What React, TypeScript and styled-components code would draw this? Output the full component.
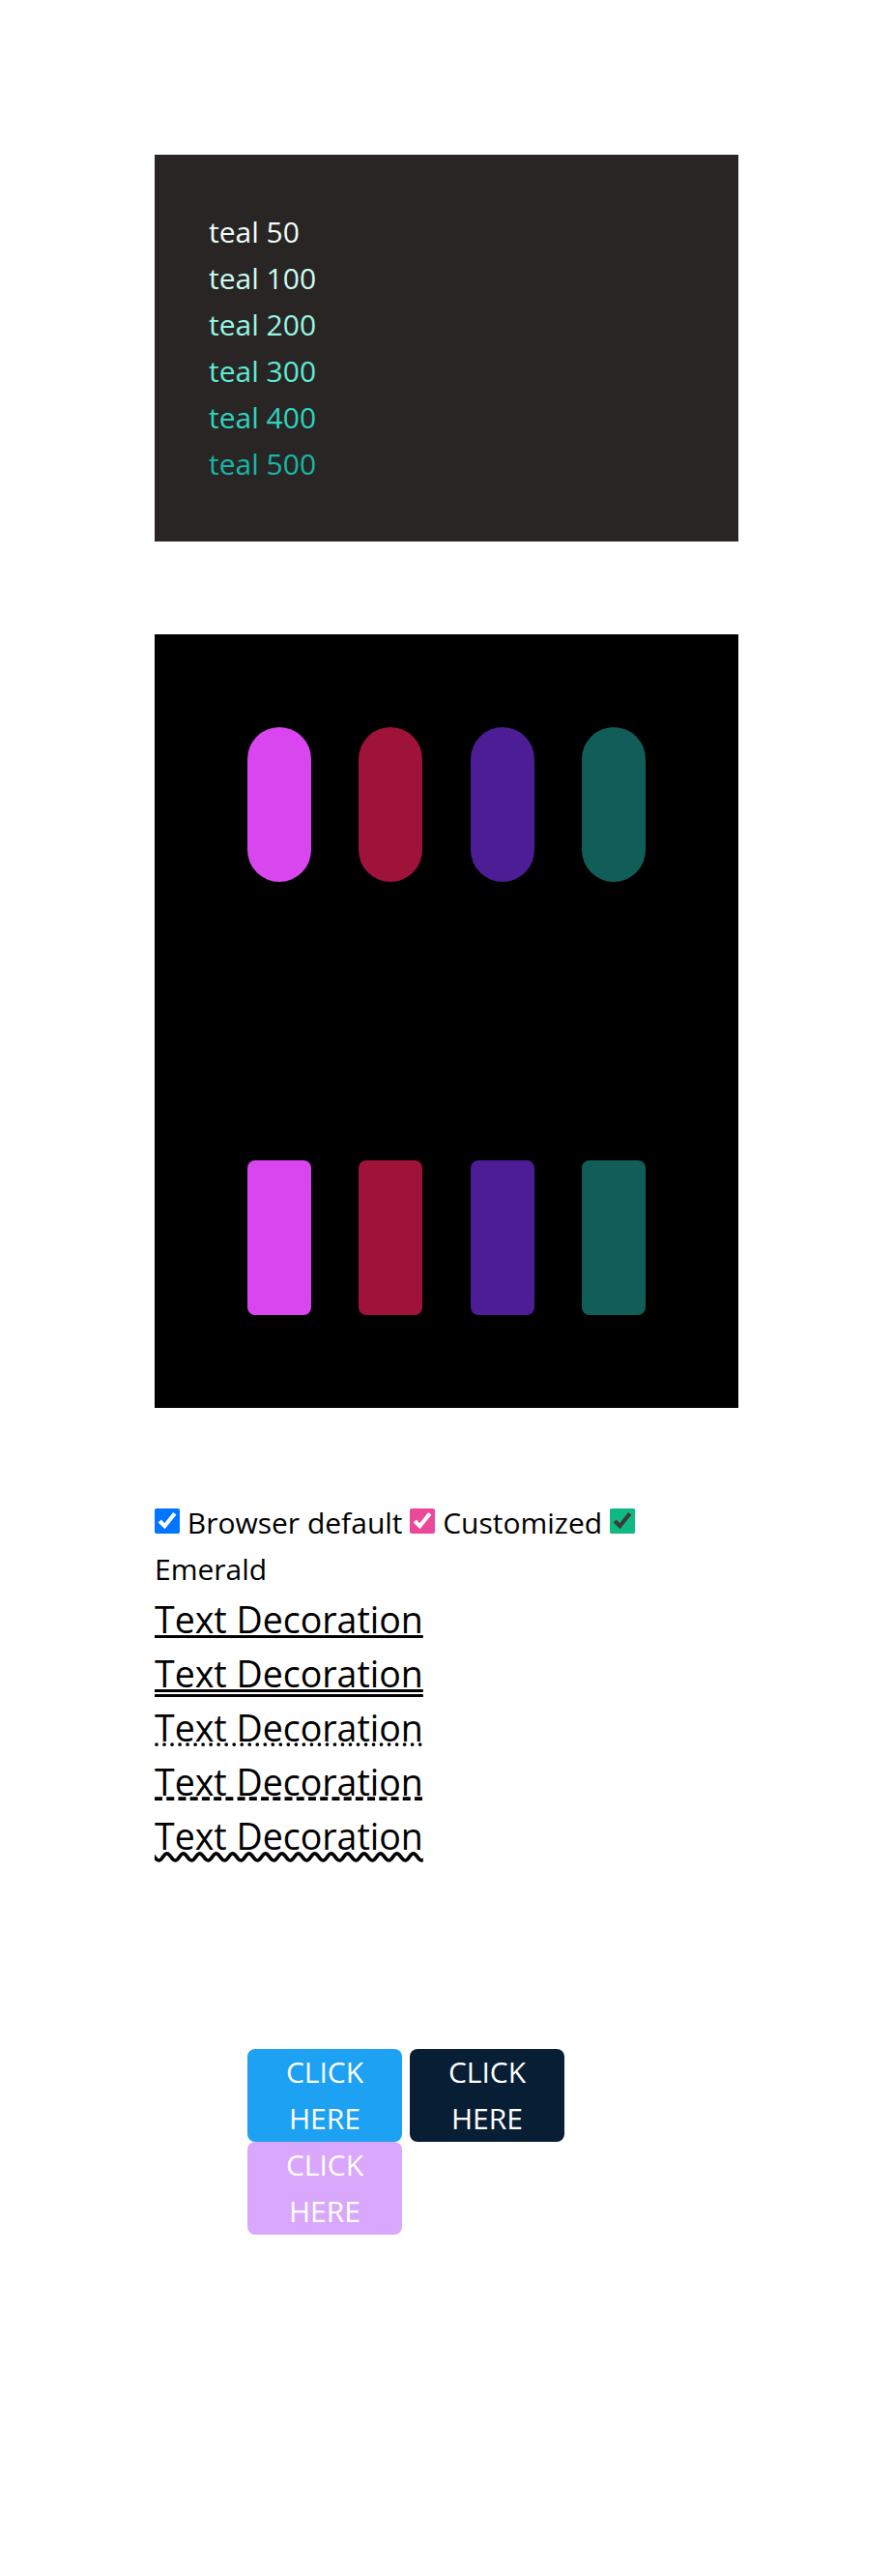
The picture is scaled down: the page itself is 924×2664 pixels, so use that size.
import React from 'react';
import styled, { createGlobalStyle } from 'styled-components';

const GlobalStyle = createGlobalStyle`
    html, body {
        margin: 0;
        padding: 0;
        background: #ffffff;
    }
    body {
        font-family: "Open Sans", "Noto Sans", sans-serif;
        font-size: 30px;
        line-height: 48px;
        color: #000000;
    }
`;

const tealShades = [
    { name: 'teal 50', color: '#f0fdfa' },
    { name: 'teal 100', color: '#ccfbf1' },
    { name: 'teal 200', color: '#99f6e4' },
    { name: 'teal 300', color: '#5eead4' },
    { name: 'teal 400', color: '#2dd4bf' },
    { name: 'teal 500', color: '#14b8a6' },
];

const swatchColors = ['#d946ef', '#9f1239', '#4c1d95', '#115e59'];

const decorations = ['solid', 'double', 'dotted', 'dashed', 'wavy'];

const buttons = [
    { bg: '#1da1f2' },
    { bg: '#081e34' },
    { bg: '#d9a8fc' },
];

function App() {
    return (
        <Page>
            <GlobalStyle />
            <TealPanel>
                {tealShades.map((shade) => (
                    <TealLine key={shade.name} $color={shade.color}>{shade.name}</TealLine>
                ))}
            </TealPanel>

            <SwatchPanel>
                <SwatchRow>
                    {swatchColors.map((c) => (
                        <Swatch key={'pill' + c} $color={c} $radius="33px" />
                    ))}
                </SwatchRow>
                <SwatchRow>
                    {swatchColors.map((c) => (
                        <Swatch key={'box' + c} $color={c} $radius="8px" />
                    ))}
                </SwatchRow>
            </SwatchPanel>

            <CheckLine>
                <Check type="checkbox" defaultChecked /> Browser default{' '}
                <Check type="checkbox" defaultChecked $accent="#ec4899" /> Customized{' '}
                <Check type="checkbox" defaultChecked $accent="#10b981" /> Emerald
            </CheckLine>

            <Decorations>
                {decorations.map((style) => (
                    <Decorated key={style} $style={style}>Text Decoration</Decorated>
                ))}
            </Decorations>

            <ButtonArea>
                <ButtonRow>
                    {buttons.map((b, i) => (
                        <ClickButton key={i} type="button" $bg={b.bg}>CLICK HERE</ClickButton>
                    ))}
                </ButtonRow>
            </ButtonArea>
        </Page>
    );
}

const Page = styled.div`
    width: 604px;
    padding: 160px 160px 160px;
`;

const TealPanel = styled.div`
    background-color: #292524;
    padding: 56px;
    margin-bottom: 96px;
`;

const TealLine = styled.div<{ $color: string }>`
    color: ${(props) => props.$color};
    font-size: 30px;
    line-height: 48px;
`;

const SwatchPanel = styled.div`
    background-color: #000000;
    padding: 96px;
    display: flex;
    flex-direction: column;
    gap: 288px;
    margin-bottom: 95px;
`;

const SwatchRow = styled.div`
    display: flex;
    justify-content: space-between;
`;

const Swatch = styled.div<{ $color: string; $radius: string }>`
    width: 66px;
    height: 160px;
    background-color: ${(props) => props.$color};
    border-radius: ${(props) => props.$radius};
`;

const CheckLine = styled.div`
    font-size: 30px;
    line-height: 48px;
`;

const Check = styled.input<{ $accent?: string }>`
    width: 26px;
    height: 26px;
    margin: 0;
    vertical-align: baseline;
    ${(props) => props.$accent && `accent-color: ${props.$accent};`}
`;

const Decorations = styled.div`
    font-size: 37.5px;
    line-height: 56px;
`;

const Decorated = styled.div<{ $style: string }>`
    text-decoration-line: underline;
    text-decoration-style: ${(props) => props.$style};
    text-decoration-color: #000000;
`;

const ButtonArea = styled.div`
    margin-top: 96px;
    padding: 96px;
`;

const ButtonRow = styled.div`
    display: flex;
    flex-wrap: wrap;
    column-gap: 8px;
    row-gap: 0;
`;

const ClickButton = styled.button<{ $bg: string }>`
    width: 160px;
    height: 96px;
    padding: 0;
    border: none;
    border-radius: 8px;
    background-color: ${(props) => props.$bg};
    color: #ffffff;
    font-family: "Open Sans", "Noto Sans", sans-serif;
    font-size: 30px;
    line-height: 48px;
    text-align: center;
`;

export default App;
